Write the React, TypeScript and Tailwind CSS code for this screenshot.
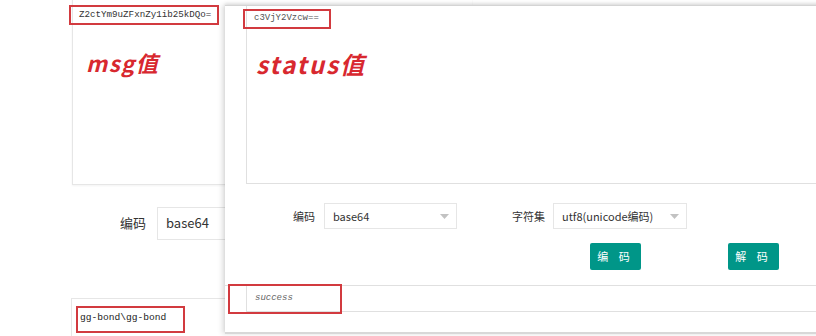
import React from 'react';

const mono = { fontFamily: '"Liberation Mono", "DejaVu Sans Mono", monospace' };
const cjk = '[font-family:"Noto_Sans_CJK_SC","Microsoft_YaHei",sans-serif]';

const Caret: React.FC = () => (
  <svg width="9" height="5" viewBox="0 0 9 5" className="shrink-0">
    <path d="M0 0 L9 0 L4.5 5 Z" fill="#c2c2c2" />
  </svg>
);

const Select: React.FC<{ value: string; width: string }> = ({ value, width }) => (
  <div className={`${width} h-[26px] border border-[#e6e6e6] bg-white flex items-center justify-between pl-[8px] pr-[7px] text-[11px] text-[#333]`}>
    <span>{value}</span>
    <Caret />
  </div>
);

const App: React.FC = () => {
  return (
    <div className={`relative w-[816px] h-[336px] bg-white overflow-hidden ${cjk}`}>
      {/* window behind */}
      <div className="absolute left-0 top-0 w-[400px] h-[336px] flex flex-col">
        <div className="ml-[72px] mt-[-2px] w-[400px] h-[195px] border-l border-b border-[#e6e6e6] shadow-[0_1px_2px_rgba(0,0,0,0.05)] pt-[48px] pl-[13px]">
          <span className="text-[#d8282f] text-[22px] font-bold tracking-[1.5px] italic">msg值</span>
        </div>
        <div className="flex items-center mt-[22px] h-[33px]">
          <span className="ml-[120px] w-[37px] text-[13px] text-[#333]">编码</span>
          <div className="w-[200px] h-[33px] border border-[#e6e6e6] flex items-center pl-[8px] text-[13px] text-[#333]">base64</div>
        </div>
        <div className="ml-[71px] mt-[58px] w-[400px] h-[40px] border-t border-l border-[#e6e6e6] pt-[12px] pl-[8px] text-[9.6px] text-[#222]" style={mono}>
          gg-bond\gg-bond
        </div>
      </div>

      {/* annotations on window behind */}
      <div className="absolute left-[69px] top-[5px] w-[150px] h-[20px] border-2 border-[#d23a3f] flex items-center pl-[8px] text-[9.2px] text-[#333]" style={mono}>
        Z2ctYm9uZFxnZy1ib25kDQo=
      </div>
      <div className="absolute left-[76px] top-[306px] w-[109px] h-[27px] border-2 border-[#d23a3f]" />

      {/* window in front */}
      <div className="absolute left-[225px] top-[5px] w-[600px] h-[329px] bg-white border-t border-[#d4d4d4] shadow-[-3px_0_5px_rgba(0,0,0,0.12),0_-2px_3px_rgba(0,0,0,0.08)] flex flex-col">
        <div className="ml-[21px] h-[178px] border-l border-b border-[#e0e0e0] pt-[40px] pl-[9px]">
          <span className="text-[#d8282f] text-[24px] font-bold tracking-[2px] italic">status值</span>
        </div>
        <div className="flex items-center mt-[19px] h-[26px]">
          <span className="ml-[68px] w-[31px] text-[11px] text-[#333]">编码</span>
          <Select value="base64" width="w-[133px]" />
          <span className="ml-[55px] w-[41px] text-[11px] text-[#333]">字符集</span>
          <Select value="utf8(unicode编码)" width="w-[134px]" />
        </div>
        <div className="flex mt-[14px] h-[27px]">
          <button className="ml-[365px] w-[51px] h-[27px] bg-[#009688] text-white text-[11px] tracking-[4px] rounded-[2px]">编 码</button>
          <button className="ml-[87px] w-[51px] h-[27px] bg-[#009688] text-white text-[11px] tracking-[4px] rounded-[2px]">解 码</button>
        </div>
        <div className="mt-[15px] border-t border-[#e0e0e0]">
          <div className="ml-[21px] h-[26px] border-l border-b border-[#e0e0e0] flex items-center pl-[8px] text-[9px] italic text-[#666]" style={mono}>
            success
          </div>
        </div>
        <div className="flex-1" />
        <div className="h-[2px] bg-[#d8d8d8]" />
      </div>

      {/* annotations on window in front */}
      <div className="absolute left-[243px] top-[9px] w-[88px] h-[20px] border-2 border-[#d23a3f] flex items-center pl-[9px] text-[9px] text-[#555]" style={mono}>
        c3VjY2Vzcw==
      </div>
      <div className="absolute left-[228px] top-[284px] w-[114px] h-[30px] border-2 border-[#d23a3f]" />
    </div>
  );
};

export default App;
